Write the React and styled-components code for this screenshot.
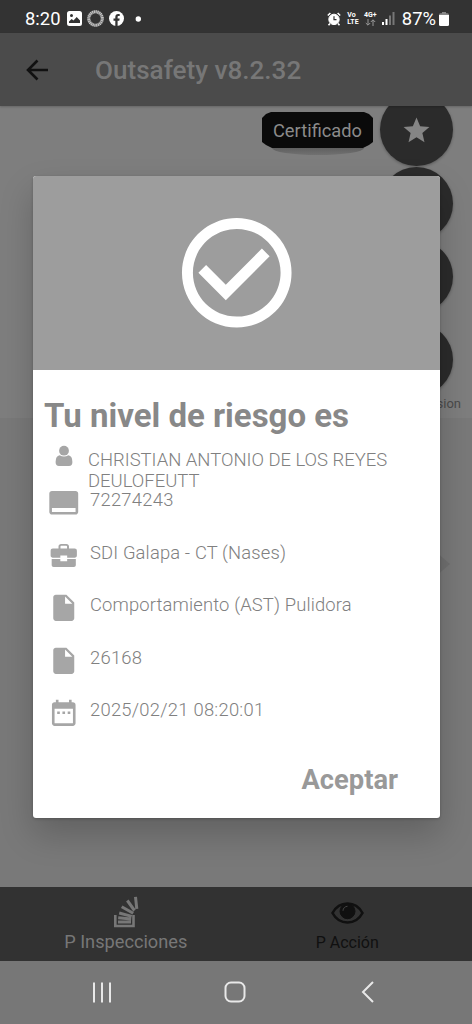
import React from "react";
import styled, { createGlobalStyle } from "styled-components";

const GlobalStyle = createGlobalStyle`
  * {
    box-sizing: border-box;
  }
  body {
    margin: 0;
    font-family: Roboto, sans-serif;
  }
`;

const Screen = styled.div`
  position: relative;
  display: flex;
  flex-direction: column;
  width: 472px;
  height: 1024px;
  background-color: #7a7a7a;
  overflow: hidden;
`;

const StatusBar = styled.div`
  display: flex;
  align-items: center;
  justify-content: space-between;
  height: 33px;
  padding: 4px 23px 0 25px;
  background-color: #333;
  color: #fff;
`;

const StatusGroup = styled.div`
  display: flex;
  align-items: center;
  gap: ${({ $gap }) => $gap};
`;

const StatusText = styled.span`
  font-size: 18.4px;
  line-height: 20px;
`;

const NetworkLabel = styled.div`
  display: flex;
  flex-direction: column;
  align-items: ${({ $align }) => $align || "flex-start"};
  width: ${({ $width }) => $width};
  margin-left: ${({ $space }) => $space || "0"};
  font-size: 7px;
  font-weight: 700;
  line-height: 7px;
`;

const AppBar = styled.header`
  position: relative;
  z-index: 1;
  display: flex;
  align-items: center;
  gap: 46px;
  height: 73px;
  padding: 1px 26px 0;
  background-color: #4b4b4b;
  box-shadow: 0 1px 2px rgba(0, 0, 0, 0.2);
`;

const AppTitle = styled.h1`
  margin: 0;
  color: #777;
  font-size: 26.1px;
  font-weight: 500;
  line-height: 32px;
`;

const Content = styled.main`
  display: flex;
  justify-content: flex-end;
  flex: 1;
  padding-right: 11px;
  background: linear-gradient(#7e7e7e 312px, #797979 312px);
`;

const ChipHolder = styled.div`
  display: flex;
  flex-direction: column;
  align-items: center;
  width: 111px;
  margin: 6px 7px 0 0;
`;

const Chip = styled.div`
  width: 111px;
  height: 36px;
  padding-top: 1px;
  background-color: #0a0a0a;
  color: #8b8b8b;
  font-size: 18.3px;
  line-height: 35px;
  text-align: center;
  clip-path: polygon(
    9px 0,
    102px 0,
    107px 2px,
    111px 6px,
    111px 30px,
    107px 33px,
    101px 36px,
    10px 36px,
    4px 33px,
    0 30px,
    0 6px,
    4px 2px
  );
`;

const ChipShadow = styled.div`
  width: 92px;
  height: 7px;
  border-radius: 0 0 50% 50% / 0 0 100% 100%;
  background: linear-gradient(#5f5f5f, #717171);
`;

const ActionColumn = styled.div`
  display: flex;
  flex-direction: column;
  align-items: flex-end;
  margin-top: -13px;
`;

const ActionButton = styled.button`
  display: flex;
  align-items: center;
  justify-content: center;
  width: 73px;
  height: 73px;
  margin: 0 8px ${({ $space }) => $space || "0.5px"} 0;
  padding: 1px 0 0;
  border: none;
  border-radius: 50%;
  background-color: #2b2b2b;
  box-shadow: 0 1px 3px rgba(0, 0, 0, 0.3);
`;

const ActionLabel = styled.span`
  color: #4b4b4b;
  font-size: 13px;
  line-height: 16px;
`;

const TabBar = styled.nav`
  display: flex;
  height: 74px;
  padding: 0 14px 0 15px;
  background-color: #323232;
`;

const Tab = styled.div`
  display: flex;
  flex-direction: column;
  align-items: center;
  justify-content: flex-end;
  gap: ${({ $active }) => ($active ? "3px" : "4px")};
  flex: 1;
  padding-bottom: ${({ $active }) => ($active ? "8px" : "7px")};
  color: ${({ $active }) => ($active ? "#777" : "#101010")};
  font-size: ${({ $active }) => ($active ? "18.2px" : "16px")};
  line-height: 22px;
`;

const SystemNav = styled.div`
  display: flex;
  align-items: center;
  justify-content: space-between;
  height: 63px;
  padding: 0 98px 1px 92px;
  background-color: #777;
`;

const Dialog = styled.section`
  position: absolute;
  top: 176px;
  left: 33px;
  z-index: 2;
  display: flex;
  flex-direction: column;
  width: 407px;
  height: 642px;
  border-radius: 3px;
  background-color: #fff;
  box-shadow: 0 16px 34px rgba(0, 0, 0, 0.2), 0 1px 3px rgba(0, 0, 0, 0.2);
  overflow: hidden;
`;

const DialogHeader = styled.div`
  display: flex;
  align-items: center;
  justify-content: center;
  height: 194px;
  background-color: #9d9d9d;
`;

const DialogTitle = styled.h2`
  margin: 26px 0 0 11px;
  color: #888;
  font-size: 33px;
  font-weight: 700;
  line-height: 40px;
`;

const PersonRow = styled.div`
  display: flex;
  height: 51px;
  padding: 9px 0 0 22px;
  gap: 15px;
`;

const PersonName = styled.div`
  width: 320px;
  margin-top: 4.5px;
  color: #808080;
  font-size: 18.45px;
  font-weight: 300;
  line-height: 21.5px;
`;

const InfoRow = styled.div`
  display: flex;
  height: 52.6px;
  padding-left: 15px;
  gap: 10.5px;
`;

const InfoText = styled.span`
  margin-top: 2px;
  color: #808080;
  font-size: 18.4px;
  font-weight: 300;
  line-height: 22px;
  letter-spacing: ${({ $numeric }) => ($numeric ? "0.25px" : "0.14px")};
`;

const AcceptButton = styled.button`
  align-self: flex-end;
  margin: 13px 42px 0 0;
  padding: 0;
  border: none;
  background: none;
  color: #999;
  font-family: inherit;
  font-size: 27.3px;
  font-weight: 700;
  line-height: 34px;
`;

const Icon = styled.svg`
  display: block;
  flex-shrink: 0;
  fill: ${({ $fill }) => $fill || "currentColor"};
  stroke: ${({ $stroke }) => $stroke || "none"};
`;

const ScrollArrow = styled(Icon)`
  margin: 140px 11px 0 0;
`;

const rows = [
  { icon: "card", text: "72274243", numeric: true },
  { icon: "briefcase", text: "SDI Galapa - CT (Nases)" },
  { icon: "file", text: "Comportamiento (AST) Pulidora" },
  { icon: "file", text: "26168", numeric: true },
  { icon: "calendar", text: "2025/02/21 08:20:01", numeric: true },
];

const paths = {
  card: "M21 3H3c-1.1 0-2 .9-2 2v14c0 1.1.9 2 2 2h18c1.1 0 2-.9 2-2V5c0-1.1-.9-2-2-2zm0 16H3v-3h18v3z",
  briefcase:
    "M8 6.500V5c0-1.300.8-2 2-2h4c1.200 0 2 .7 2 2v1.500h4.300c1 0 1.700.7 1.700 1.700v3.600c0 1-.7 1.700-1.700 1.700H14.600v-1.600H9.400v1.600H3.700C2.700 13.500 2 12.800 2 11.800V8.200c0-1 .7-1.700 1.700-1.700zM9.500 6.500h5V5c0-.4-.2-.6-.6-.6h-3.800c-.4 0-.6.2-.6.6zM2.800 14.500h6.600v1.600h5.200v-1.600h6.600v4.500c0 .9-.6 1.500-1.500 1.500H4.300c-.9 0-1.500-.6-1.500-1.500z",
  file: "M6 2c-1.100 0-1.990.9-1.990 2L4 20c0 1.100.89 2 1.990 2H18c1.100 0 2-.9 2-2V8l-6-6H6zm7 7V3.500L18.500 9H13z",
  calendar:
    "M9 11H7v2h2v-2zm4 0h-2v2h2v-2zm4 0h-2v2h2v-2zm2-7h-1V2h-2v2H8V2H6v2H5c-1.110 0-1.990.9-1.990 2L3 20c0 1.100.89 2 2 2h14c1.100 0 2-.9 2-2V6c0-1.100-.9-2-2-2zm0 16H5V9h14v11z",
};

const StatusIcons = () => (
  <StatusBar>
    <StatusGroup $gap="5px">
      <StatusGroup $gap="7px">
        <StatusText>8:20</StatusText>
        <Icon width="15" height="15" viewBox="0 0 15 15">
          <path
            fillRule="evenodd"
            d="M2.500 0h10A2.500 2.500 0 0 1 15 2.500v10a2.500 2.500 0 0 1-2.500 2.500h-10A2.500 2.500 0 0 1 0 12.500v-10A2.500 2.500 0 0 1 2.500 0zM2 12h11V9.500L9.700 6 6.500 9.500 4.700 8 2 10.500zM4.500 3a1.500 1.500 0 1 0 0 3 1.500 1.500 0 0 0 0-3z"
          />
        </Icon>
      </StatusGroup>
      <Icon width="17" height="17" viewBox="0 0 17 17" $fill="none">
        <circle cx="8.500" cy="8.500" r="6.800" stroke="#777" strokeWidth="3" />
        <circle cx="8.500" cy="8.500" r="6.800" stroke="#c6c6c6" strokeWidth="3" strokeDasharray="1 .78" />
      </Icon>
      <Icon width="15" height="15" viewBox="0 0 15 15">
        <circle cx="7.500" cy="7.500" r="7.500" />
        <path
          d="M6.300 15V9.800H4.500V7.600h1.800V6.200c0-2 1.100-3.100 2.900-3.100h1.500v2H9.600c-.7 0-1 .4-1 1v1.500h2.100l-.4 2.200H8.600V15z"
          fill="#333"
        />
      </Icon>
      <Icon width="16" height="6" viewBox="0 0 16 6">
        <circle cx="9.300" cy="3" r="2.700" />
      </Icon>
    </StatusGroup>
    <StatusGroup $gap="4.5px">
      <Icon width="14" height="14" viewBox="0 0 14 14" $fill="none" $stroke="#fff">
        <circle cx="7" cy="7.400" r="5.200" fill="#fff" />
        <path d="M.8 3.500L3.400 1M13.200 3.500L10.600 1M3 11.500l-1.500 1.800M11 11.500l1.500 1.800" strokeWidth="1.600" />
        <path d="M7 4.300v3.400h2.500" stroke="#333" strokeWidth="1.200" />
      </Icon>
      <NetworkLabel $width="11px" $space="2px">
        <span>Vo</span>
        <span>LTE</span>
      </NetworkLabel>
      <NetworkLabel $width="15px" $align="center">
        <span>4G+</span>
        <Icon width="11" height="7" viewBox="0 0 11 7" $fill="none" $stroke="#999">
          <path d="M3 0v6M.8 4L3 6.200 5.200 4M8 7V1M5.800 3L8 .8 10.200 3" />
        </Icon>
      </NetworkLabel>
      <Icon width="15" height="13" viewBox="0 0 15 13">
        <path d="M0 10h2v3H0zM3.500 7h2v6h-2z" />
        <path d="M7 3.500h2V13H7zM10.500 0h2v13h-2z" fill="#777" />
      </Icon>
      <StatusGroup $gap="3px">
        <StatusText>87%</StatusText>
        <Icon width="10" height="14" viewBox="0 0 10 14">
          <path d="M3 0h4v1.300h1.500Q10 1.300 10 3H0q0-1.700 1.500-1.700H3z" fill="#888" />
          <path d="M0 3h10v9.500q0 1.500-1.500 1.500h-7Q0 14 0 12.500z" />
        </Icon>
      </StatusGroup>
    </StatusGroup>
  </StatusBar>
);

const RiskDialog = () => (
  <Dialog>
    <DialogHeader>
      <Icon width="131.500" height="131.500" viewBox="0 0 24 24" $fill="#fff">
        <path d="M16.590 7.580L10 14.170l-3.590-3.580L5 12l5 5 8-8zM12 2C6.480 2 2 6.480 2 12s4.480 10 10 10 10-4.480 10-10S17.520 2 12 2zm0 18c-4.420 0-8-3.580-8-8s3.580-8 8-8 8 3.580 8 8-3.580 8-8 8z" />
      </Icon>
    </DialogHeader>
    <DialogTitle>Tu nivel de riesgo es</DialogTitle>
    <PersonRow>
      <Icon width="18" height="22" viewBox="0 0 18 22" $fill="#a6a6a6">
        <circle cx="9" cy="5.700" r="4.900" />
        <path d="M4.600 10.200Q9 13 13.400 10.200 17.400 11 17.400 17 17.400 20.900 14 20.900H4Q.6 20.900.6 17 .6 11 4.600 10.200z" />
      </Icon>
      <PersonName>CHRISTIAN ANTONIO DE LOS REYES DEULOFEUTT</PersonName>
    </PersonRow>
    {rows.map((row) => (
      <InfoRow key={row.text}>
        <Icon width="31.500" height="31.500" viewBox="0 0 24 24" $fill="#a6a6a6">
          <path d={paths[row.icon]} fillRule="evenodd" />
        </Icon>
        <InfoText $numeric={row.numeric}>{row.text}</InfoText>
      </InfoRow>
    ))}
    <AcceptButton>Aceptar</AcceptButton>
  </Dialog>
);

const App = () => {
  return (
    <Screen>
      <GlobalStyle />
      <StatusIcons />
      <AppBar>
        <Icon width="23" height="22" viewBox="0 0 23 22" $fill="none" $stroke="#111">
          <path d="M22 11H2M11.500 1.500L2 11l9.500 9.500" strokeWidth="2.600" />
        </Icon>
        <AppTitle>Outsafety v8.2.32</AppTitle>
      </AppBar>
      <Content>
        <ChipHolder>
          <Chip>Certificado</Chip>
          <ChipShadow />
        </ChipHolder>
        <ActionColumn>
          <ActionButton>
            <Icon width="31" height="31" viewBox="0 0 24 24" $fill="#858585">
              <path d="M12 17.270L18.180 21l-1.640-7.030L22 9.240l-7.190-.61L12 2 9.190 8.630 2 9.240l5.460 4.730L5.820 21z" />
            </Icon>
          </ActionButton>
          <ActionButton />
          <ActionButton $space="10px" />
          <ActionButton $space="0" />
          <ActionLabel>Comision</ActionLabel>
          <ScrollArrow width="14" height="24" viewBox="0 0 14 24" $fill="#707070">
            <path d="M0 0l14 12L0 24z" />
          </ScrollArrow>
        </ActionColumn>
      </Content>
      <TabBar>
        <Tab $active>
          <Icon width="26" height="32" viewBox="0 0 26 32" $fill="none" $stroke="#777">
            <path d="M2.300 19v11h18.200V19" strokeWidth="2.600" />
            <path
              d="M5 26h13M5.200 21.800l13 1.200M6.200 17l12.500 3.400M8.700 10.800l11.500 6.500M14.300 4.500l7.200 10M22.500.8l1.300 12"
              strokeWidth="3"
            />
          </Icon>
          P Inspecciones
        </Tab>
        <Tab>
          <Icon width="33" height="27" viewBox="0 0 33 27" $fill="none" $stroke="#101010">
            <path
              d="M1.500 12C5 5.500 10.500 2.500 16.500 2.500S28 5.500 31.500 12C28 18.500 22.500 21.500 16.500 21.500S5 18.500 1.500 12z"
              strokeWidth="2.600"
            />
            <circle cx="16.500" cy="10.200" r="7.500" fill="#101010" />
            <path d="M12 9.800a4.500 4.500 0 0 1 4.500-4.500" stroke="#444" strokeWidth="1" />
          </Icon>
          P Acción
        </Tab>
      </TabBar>
      <SystemNav>
        <Icon width="20" height="21" viewBox="0 0 20 21" $fill="none" $stroke="#e8e8e8">
          <path d="M2 .5v20M10 .5v20M18 .5v20" strokeWidth="2" />
        </Icon>
        <Icon width="26" height="22" viewBox="0 0 26 22" $fill="none" $stroke="#e8e8e8">
          <rect x="1.500" y="1.500" width="19" height="19" rx="5.500" strokeWidth="2" />
        </Icon>
        <Icon width="13" height="22" viewBox="0 0 13 22" $fill="none" $stroke="#e8e8e8">
          <path d="M12 1L2 11l10 10" strokeWidth="2" />
        </Icon>
      </SystemNav>
      <RiskDialog />
    </Screen>
  );
};

export default App;
